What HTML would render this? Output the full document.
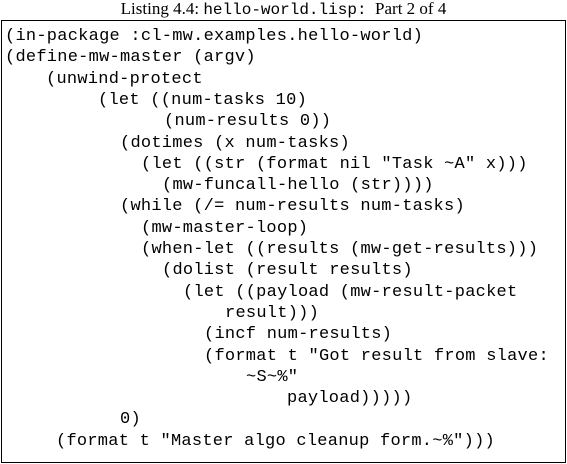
<!DOCTYPE html>
<html><head><style>
body{margin:0;width:567px;height:464px;background:#fff;position:relative;overflow:hidden;}
.cap{position:absolute;top:0;left:0;width:567px;text-align:center;font:17px "Liberation Serif",serif;line-height:18px;}
.cap span{font-family:"Liberation Mono",monospace;font-size:16px;}
.box{position:absolute;left:1px;top:20px;width:563px;height:441px;border:1px solid #000;}
.l{position:absolute;font:17px "Liberation Mono",monospace;letter-spacing:0.25px;white-space:pre;line-height:20px;color:#000;}
</style></head><body>
<div class="cap">Listing 4.4: <span>hello-world.lisp:</span>&nbsp; Part 2 of 4</div>
<div class="box"></div>
<div class="l" style="left:5px;top:27px">(in-package :cl-mw.examples.hello-world)</div>
<div class="l" style="left:5px;top:48px">(define-mw-master (argv)</div>
<div class="l" style="left:46px;top:70px">(unwind-protect</div>
<div class="l" style="left:98px;top:91px">(let ((num-tasks 10)</div>
<div class="l" style="left:164px;top:112px">(num-results 0))</div>
<div class="l" style="left:120px;top:134px">(dotimes (x num-tasks)</div>
<div class="l" style="left:141px;top:155px">(let ((str (format nil "Task ~A" x)))</div>
<div class="l" style="left:162px;top:176px">(mw-funcall-hello (str))))</div>
<div class="l" style="left:120px;top:197px">(while (/= num-results num-tasks)</div>
<div class="l" style="left:141px;top:219px">(mw-master-loop)</div>
<div class="l" style="left:141px;top:240px">(when-let ((results (mw-get-results)))</div>
<div class="l" style="left:162px;top:261px">(dolist (result results)</div>
<div class="l" style="left:183px;top:283px">(let ((payload (mw-result-packet</div>
<div class="l" style="left:225px;top:304px">result)))</div>
<div class="l" style="left:204px;top:325px">(incf num-results)</div>
<div class="l" style="left:204px;top:347px">(format t "Got result from slave:</div>
<div class="l" style="left:246px;top:368px">~S~%"</div>
<div class="l" style="left:287px;top:389px">payload)))))</div>
<div class="l" style="left:120px;top:410px">0)</div>
<div class="l" style="left:56px;top:432px">(format t "Master algo cleanup form.~%")))</div>
</body></html>
